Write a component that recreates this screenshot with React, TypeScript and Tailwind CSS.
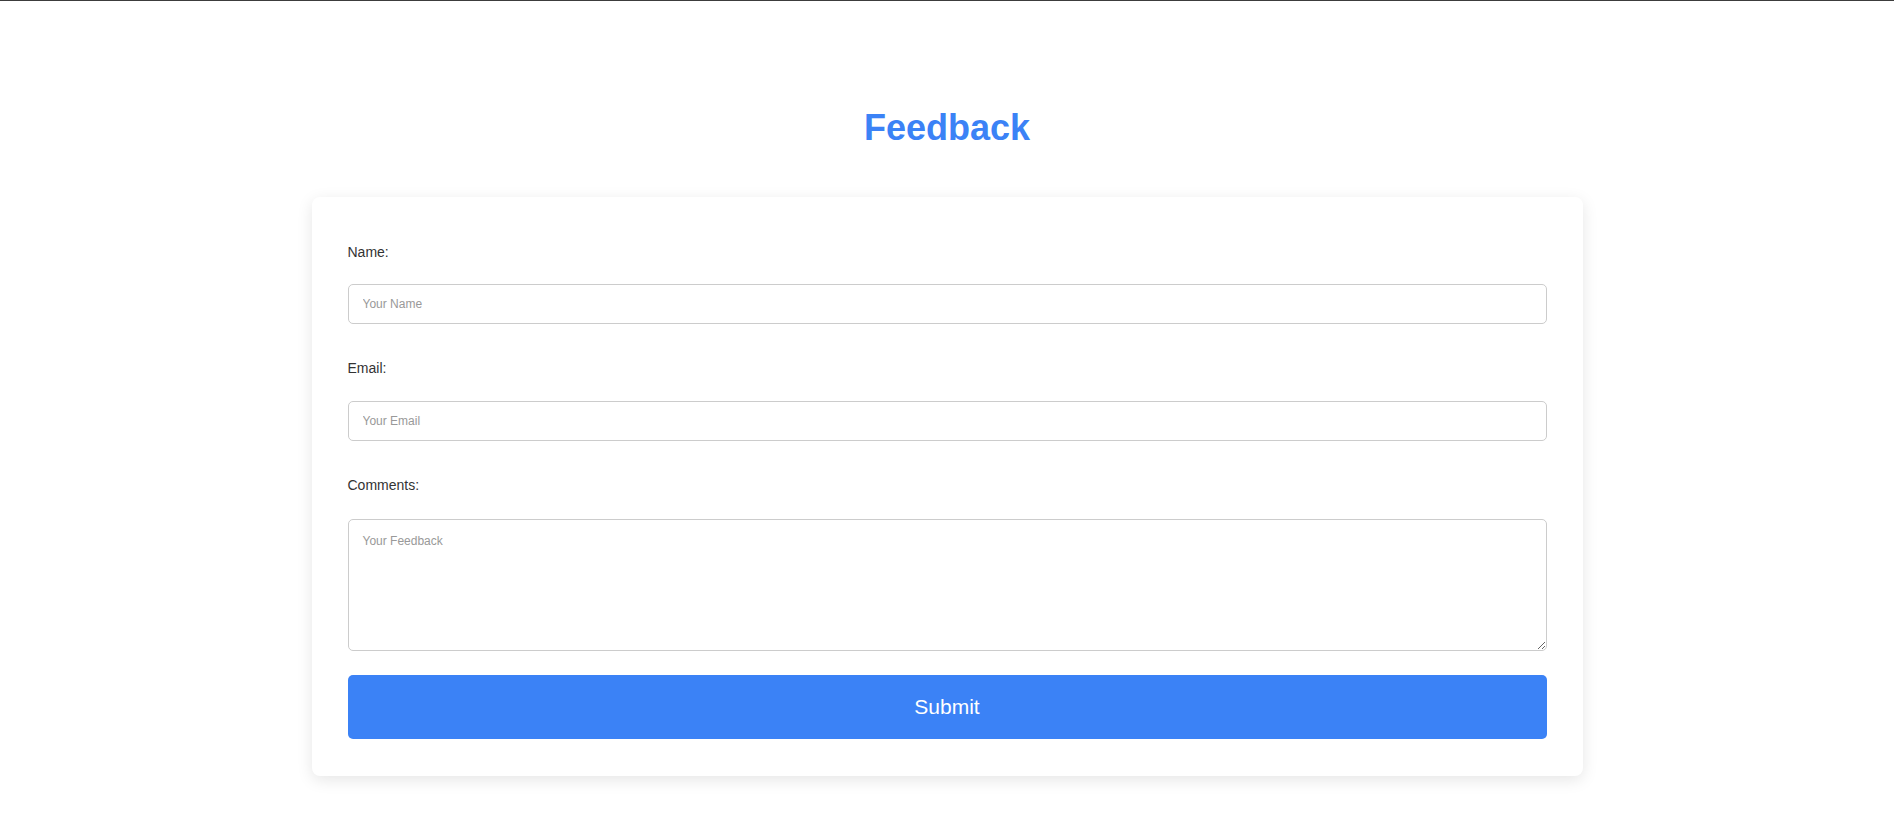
export default function App() {
  return (
    <div className="min-h-screen bg-white border-t border-[#3c3c3c] font-['Liberation_Sans',Arial,sans-serif]">
      <div className="flex flex-col items-center pt-[107px] pb-10">
        <h1 className="text-[36px] leading-[40px] font-bold text-[#3b82f6]">Feedback</h1>

        {/* Form card */}
        <form
          className="mt-[49px] w-[1271px] bg-white rounded-lg shadow-[0_4px_16px_rgba(0,0,0,0.1)] px-9 pt-[47px] pb-[37px] flex flex-col"
          onSubmit={(e) => e.preventDefault()}
        >
          <label htmlFor="name" className="text-[14px] leading-4 text-[#333]">
            Name:
          </label>
          <input
            id="name"
            type="text"
            placeholder="Your Name"
            className="mt-6 h-10 w-full rounded-[5px] border border-[#ccc] px-[14px] text-[12px] text-[#333] placeholder:text-[#999] outline-none"
          />

          <label htmlFor="email" className="mt-9 text-[14px] leading-4 text-[#333]">
            Email:
          </label>
          <input
            id="email"
            type="email"
            placeholder="Your Email"
            className="mt-[25px] h-10 w-full rounded-[5px] border border-[#ccc] px-[14px] text-[12px] text-[#333] placeholder:text-[#999] outline-none"
          />

          <label htmlFor="comments" className="mt-9 text-[14px] leading-4 text-[#333]">
            Comments:
          </label>
          <textarea
            id="comments"
            placeholder="Your Feedback"
            className="mt-[26px] h-[132px] w-full rounded-[5px] border border-[#ccc] p-[14px] text-[12px] leading-[14px] text-[#333] placeholder:text-[#999] outline-none"
          />

          <button
            type="submit"
            className="mt-6 h-16 w-full rounded-[5px] bg-[#3b82f6] text-[21px] text-white"
          >
            Submit
          </button>
        </form>
      </div>
    </div>
  );
}
